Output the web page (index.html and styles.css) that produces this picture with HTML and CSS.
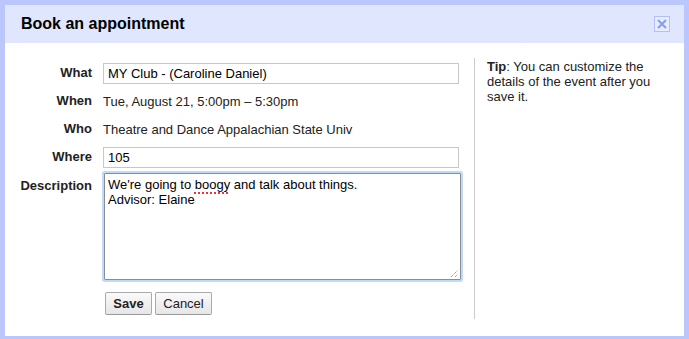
FILE: index.html
```html
<!DOCTYPE html>
<html>
<head>
<meta charset="utf-8">
<link rel="stylesheet" href="styles.css">
</head>
<body>
<div class="dialog">
  <div class="header">
    <div class="title">Book an appointment</div>
    <div class="close">
      <svg width="14" height="14" viewBox="0 0 14 14"><path d="M3 3 L11 11 M11 3 L3 11" stroke="#86a0f2" stroke-width="2.2" fill="none"/></svg>
    </div>
  </div>
  <div class="content">
    <div class="form">
      <div class="label">What</div>
      <div class="field"><div class="input">MY Club - (Caroline Daniel)</div></div>
      <div class="label">When</div>
      <div class="field"><span class="value">Tue, August 21, 5:00pm – 5:30pm</span></div>
      <div class="label">Who</div>
      <div class="field"><span class="value">Theatre and Dance Appalachian State Univ</span></div>
      <div class="label">Where</div>
      <div class="field"><div class="input">105</div></div>
      <div class="label top">Description</div>
      <div class="field-top">
        <div class="textarea">
          <div>We're going to <span class="spell">boogy</span> and talk about things.</div>
          <div>Advisor: Elaine</div>
          <svg class="grip" width="9" height="9" viewBox="0 0 9 9"><path d="M1 8 L8 1 M5 8 L8 5" stroke="#777" stroke-width="1" stroke-dasharray="1 1" fill="none"/></svg>
        </div>
      </div>
      <div></div>
      <div class="buttons">
        <button class="btn save">Save</button>
        <button class="btn">Cancel</button>
      </div>
    </div>
    <div class="tip"><span class="tip-text"><b>Tip</b>: You can customize the details of the event after you save it.</span></div>
  </div>
</div>
</body>
</html>
```
FILE: styles.css
```css
html, body { margin: 0; padding: 0; overflow: hidden; }
body {
  font-family: "Liberation Sans", Arial, sans-serif;
  font-size: 13px;
  color: #222;
  background: #fff;
}
.dialog {
  width: 689px;
  height: 339px;
  box-sizing: border-box;
  border: 5px solid #bac6fc;
  border-bottom-width: 3px;
  display: flex;
  flex-direction: column;
}
.header {
  height: 38px;
  background: #e0e6fd;
  display: flex;
  align-items: center;
  justify-content: space-between;
  padding: 0 14px 0 16px;
  flex-shrink: 0;
}
.title {
  font-size: 16px;
  font-weight: bold;
  color: #000;
}
.close {
  width: 14px;
  height: 14px;
  border: 1px solid #b3c0fa;
  background: #e8edfe;
  display: flex;
}
.content {
  display: flex;
  padding-top: 15px;
  flex: 1;
  min-height: 0;
}
.form {
  width: 469px;
  display: grid;
  grid-template-columns: 87px 358px;
  column-gap: 11px;
  align-content: start;
  padding-top: 1px;
  height: 259px;
}
.label {
  font-weight: bold;
  text-align: right;
  height: 28px;
  line-height: 28px;
  color: #222;
}
.label.top { height: auto; line-height: 15px; padding-top: 7px; }
.field { height: 28px; display: flex; align-items: center; }
.value { line-height: 15px; }
.input {
  width: 356px;
  height: 21px;
  box-sizing: border-box;
  border: 1px solid #c8c8c8;
  padding: 0 4px;
  line-height: 19px;
  color: #000;
}
.field-top { padding-top: 2px; }
.textarea {
  position: relative;
  width: 357px;
  height: 107px;
  margin-left: 1px;
  box-sizing: border-box;
  border: 1px solid #8c8c8c;
  border-radius: 1px;
  box-shadow: 0 0 0 2px #bddcfd;
  padding: 3px 3px;
  line-height: 15px;
  color: #000;
}
.spell {
  text-decoration: underline dotted #e33;
  text-decoration-skip-ink: none;
  text-underline-offset: 3px;
  text-decoration-thickness: 2px;
}
.grip { position: absolute; right: 1px; bottom: 1px; }
.buttons {
  display: flex;
  gap: 3px;
  padding-top: 12px;
  padding-left: 2px;
}
.btn {
  font-family: "Liberation Sans", Arial, sans-serif;
  font-size: 13px;
  color: #222;
  height: 23px;
  padding: 0;
  border: 1px solid #aaa;
  border-bottom-color: #999;
  border-radius: 2px;
  background: linear-gradient(#fafafa, #e6e6e6);
  line-height: 21px;
}
.btn.save { font-weight: bold; width: 47px; }
.btn:not(.save) { width: 57px; }
.tip {
  width: 180px;
  height: 260px;
  border-left: 1px solid #ccc;
  padding-left: 12px;
  padding-top: 1px;
  line-height: 15px;
  color: #222;
}
.tip-text { display: block; }
.tip b { color: #222; }
```
